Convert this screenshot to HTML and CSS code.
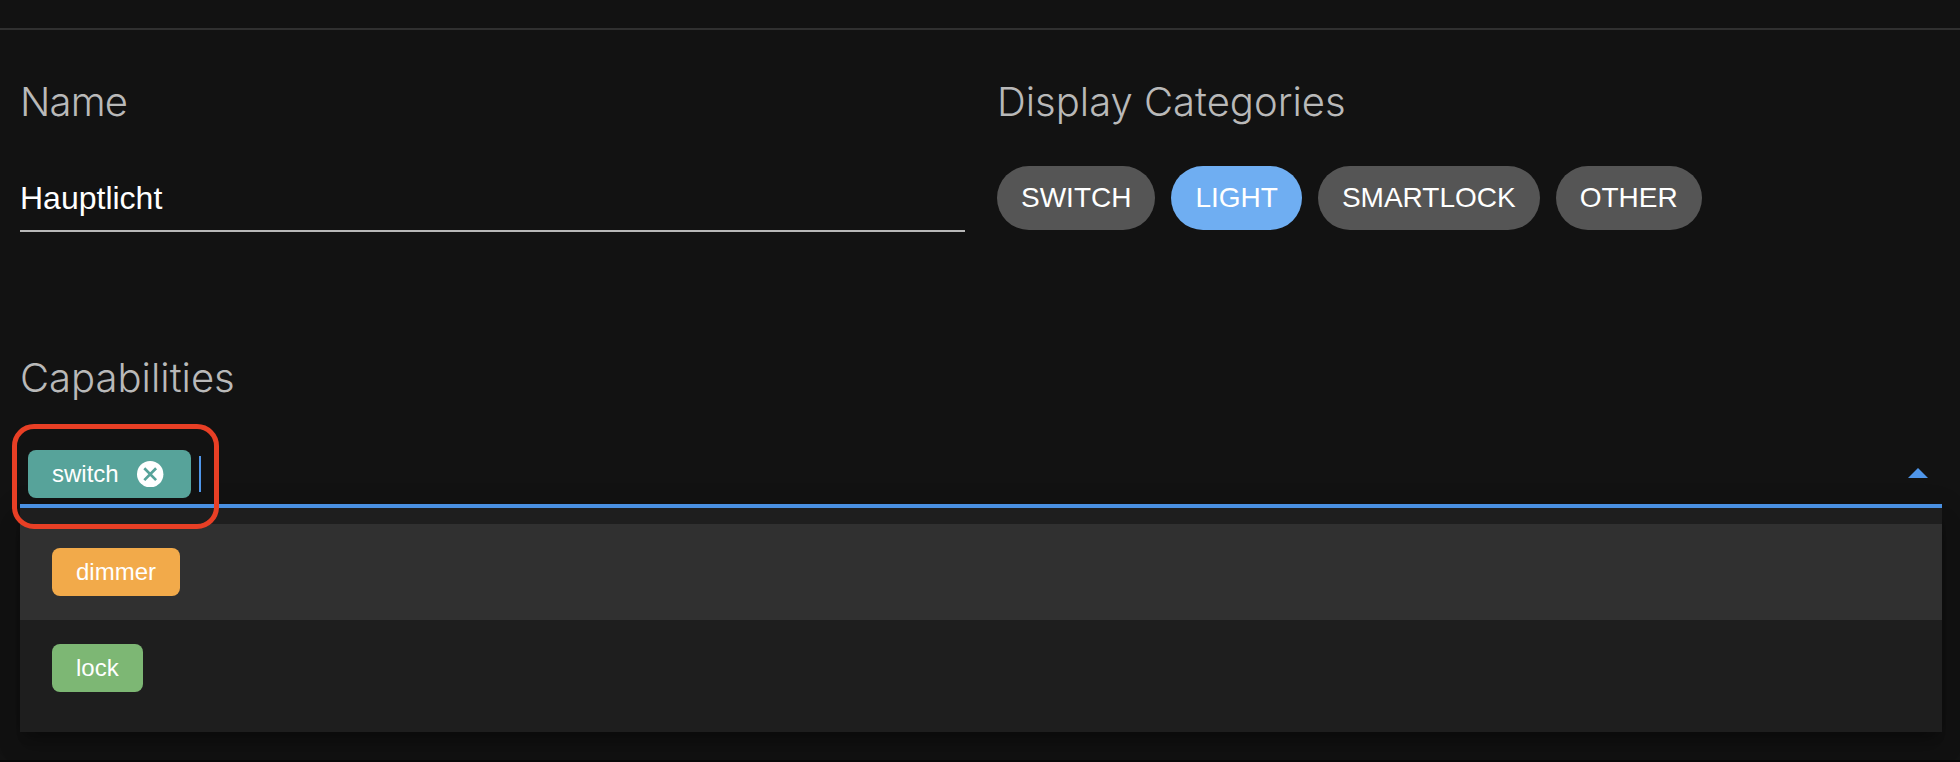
FILE: index.html
```html
<!DOCTYPE html>
<html lang="en">
<head>
<meta charset="utf-8">
<title>Device</title>
<link rel="stylesheet" href="styles.css">
</head>
<body>
<div class="page">
  <header class="topbar"></header>
  <main class="form">
    <div class="row">
      <section class="field">
        <h2 class="heading name">Name</h2>
        <div class="input">Hauptlicht</div>
      </section>
      <section class="field">
        <h2 class="heading categories">Display Categories</h2>
        <div class="chips">
          <span class="chip">SWITCH</span>
          <span class="chip chip-active">LIGHT</span>
          <span class="chip">SMARTLOCK</span>
          <span class="chip">OTHER</span>
        </div>
      </section>
    </div>
    <section class="capabilities">
      <h2 class="heading caps">Capabilities</h2>
      <div class="select">
        <span class="tag tag-switch">switch
          <svg class="close" viewBox="0 0 26.4 26.4"><circle cx="13.2" cy="13.2" r="13.2" fill="#fff"/><path d="M7.3 7.3l11.8 11.8M19.1 7.3l-11.8 11.8" stroke="#57a39a" stroke-width="2.7"/></svg>
        </span>
        <span class="caret"></span>
        <svg class="arrow" viewBox="0 0 20 10"><path d="M0 10L10 0l10 10z" fill="#4f96ea"/></svg>
        <span class="callout"></span>
      </div>
      <div class="menu">
        <div class="option option-active"><span class="tag tag-dimmer">dimmer</span></div>
        <div class="option"><span class="tag tag-lock">lock</span></div>
      </div>
    </section>
  </main>
  <footer class="bottom"></footer>
</div>
</body>
</html>
```
FILE: styles.css
```css
* { box-sizing: border-box; }
body {
  margin: 0;
  background: #121212;
  color: #fff;
  font-family: "Liberation Sans", Arial, sans-serif;
}
.page {
  height: 762px;
  display: flex;
  flex-direction: column;
  overflow: hidden;
}
.topbar { height: 30px; border-bottom: 2px solid #303030; }
.form { flex: 1; padding: 42px 18px 0 20px; }
.row { display: grid; grid-template-columns: 945px 945px; gap: 32px; height: 260px; }
.heading {
  margin: 0;
  height: 60px;
  line-height: 60px;
  font-family: Inter, "Liberation Sans", sans-serif;
  font-weight: 300;
  font-size: 40px;
  color: #b9b9b9;
  white-space: nowrap;
}
.name { letter-spacing: -0.8px; }
.input {
  height: 66px;
  margin-top: 34px;
  line-height: 64px;
  font-size: 32px;
  border-bottom: 2px solid #b8b8b8;
}
.chips { display: flex; gap: 16px; margin-top: 34px; }
.chip {
  height: 64px;
  padding: 0 24px;
  border-radius: 32px;
  background: #555;
  font-size: 28px;
  line-height: 63px;
}
.chip-active { background: #6faef2; }
.caps { margin-top: 16px; }
.select {
  position: relative;
  display: flex;
  align-items: center;
  height: 100px;
  padding: 36px 14px 0 8px;
  border-bottom: 4px solid #4a90e2;
}
.tag {
  display: inline-flex;
  align-items: center;
  height: 48px;
  padding: 0 24px;
  border-radius: 8px;
  font-size: 24px;
}
.tag-switch { gap: 18.6px; padding-right: 27px; background: #57a39a; }
.tag-dimmer { background: #f2aa4a; }
.tag-lock { background: #7db774; }
.close { width: 26.4px; height: 26.4px; }
.caret { width: 2px; height: 36px; margin-left: 8px; background: #4f96ea; }
.arrow { width: 20px; height: 10px; margin: 0 0 2px auto; }
.callout {
  position: absolute;
  z-index: 2;
  left: -8px;
  top: 16px;
  width: 207px;
  height: 105px;
  border: 5px solid #e83f25;
  border-radius: 22px;
}
.menu {
  height: 224px;
  padding: 16px 0;
  background: #1e1e1e;
  box-shadow: 0 10px 10px -6px rgba(0,0,0,.2), 0 16px 20px 2px rgba(0,0,0,.14), 0 6px 28px 4px rgba(0,0,0,.12);
}
.option { display: flex; align-items: center; height: 96px; padding: 0 32px; }
.option-active { background: #303030; }
.bottom { height: 2px; background: #080808; }
```
